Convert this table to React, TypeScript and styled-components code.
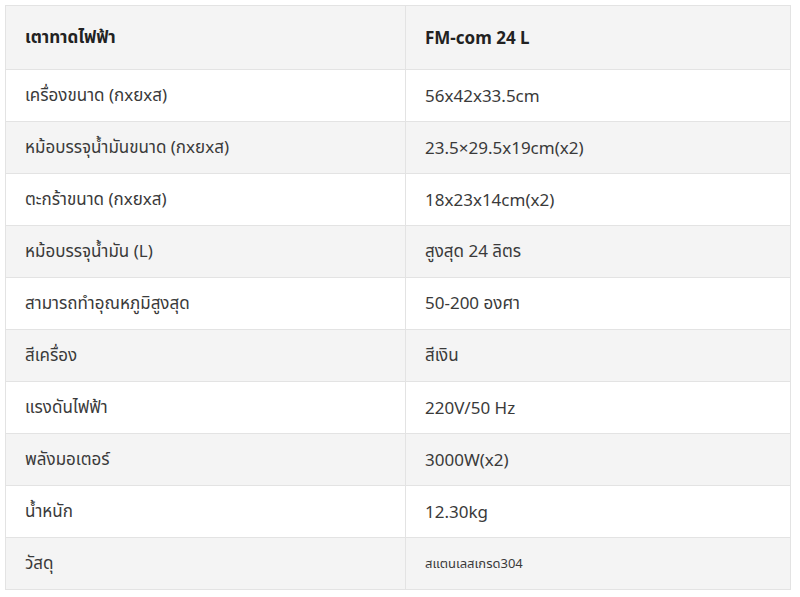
import React from "react";
import styled, { createGlobalStyle } from "styled-components";

const Global = createGlobalStyle`
  html, body { margin: 0; padding: 0; background: #ffffff; }
  body { font-family: "Noto Sans", "Noto Sans Thai", sans-serif; color: #333333; }
`;

const Page = styled.div`
  padding: 5px 9px 0 5px;
`;

const Table = styled.table`
  width: 786px;
  border-collapse: collapse;
  table-layout: fixed;
  border: 1px solid #e3e3e3;
`;

const Row = styled.tr<{ $shade: boolean }>`
  background: ${(p) => (p.$shade ? "#f4f4f4" : "#ffffff")};
`;

const Cell = styled.td<{ $head?: boolean; $small?: boolean }>`
  border: 1px solid #e3e3e3;
  padding: 0 0 0 19px;
  height: ${(p) => (p.$head ? "63px" : "51px")};
  font-size: ${(p) => (p.$small ? "13px" : "17px")};
  font-weight: ${(p) => (p.$head ? 700 : 400)};
  color: ${(p) => (p.$head ? "#222222" : "#3a3a3a")};
  vertical-align: middle;
  white-space: nowrap;
`;

const LabelCol = styled.col`
  width: 400px;
`;

const rows: [string, string, boolean?][] = [
  ["เครื่องขนาด (กxยxส)", "56x42x33.5cm"],
  ["หม้อบรรจุน้ำมันขนาด (กxยxส)", "23.5×29.5x19cm(x2)"],
  ["ตะกร้าขนาด (กxยxส)", "18x23x14cm(x2)"],
  ["หม้อบรรจุน้ำมัน (L)", "สูงสุด 24 ลิตร"],
  ["สามารถทำอุณหภูมิสูงสุด", "50-200 องศา"],
  ["สีเครื่อง", "สีเงิน"],
  ["แรงดันไฟฟ้า", "220V/50 Hz"],
  ["พลังมอเตอร์", "3000W(x2)"],
  ["น้ำหนัก", "12.30kg"],
  ["วัสดุ", "สแตนเลสเกรด304", true],
];

export default function App() {
  return (
    <Page>
      <Global />
      <Table>
        <colgroup>
          <LabelCol />
          <col />
        </colgroup>
        <tbody>
          <Row $shade>
            <Cell $head>เตาทาดไฟฟ้า</Cell>
            <Cell $head>FM-com 24 L</Cell>
          </Row>
          {rows.map(([k, v, small], i) => (
            <Row key={k} $shade={i % 2 === 1}>
              <Cell>{k}</Cell>
              <Cell $small={small}>{v}</Cell>
            </Row>
          ))}
        </tbody>
      </Table>
    </Page>
  );
}
